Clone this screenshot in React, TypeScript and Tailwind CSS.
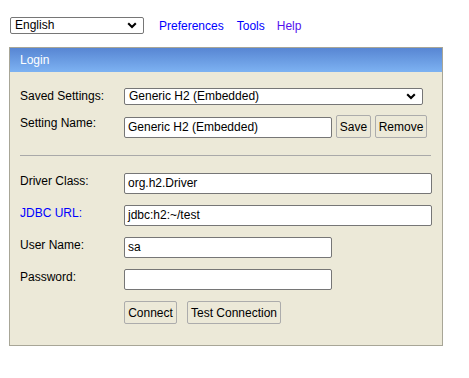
import React from "react";

function Chevron() {
  return (
    <svg width="10" height="7" viewBox="0 0 10 7" className="shrink-0">
      <path d="M1.2 1.3 L5 5 L8.8 1.3" fill="none" stroke="#000" strokeWidth="2.1" />
    </svg>
  );
}

function SelectBox({ value, className }: { value: string; className: string }) {
  return (
    <div className={`flex items-center justify-between h-[17px] border border-[#767676] rounded-[2px] bg-white pl-[4px] pr-[6px] ${className}`}>
      <span className="leading-[15px]">{value}</span>
      <Chevron />
    </div>
  );
}

function TextBox({ value, width }: { value?: string; width: string }) {
  return (
    <div className={`h-[21px] ${width} border border-[#767676] rounded-[2px] bg-white pl-[3px] flex items-center`}>
      <span className="leading-[15px]">{value}</span>
    </div>
  );
}

function Btn({ label, width }: { label: string; width: string }) {
  return (
    <div className={`h-[23px] ${width} border border-[#acacac] rounded-[2px] bg-[#ece9d8] flex items-center justify-center`}>
      {label}
    </div>
  );
}

function Row({ label, blue, children, className = "" }: { label: string; blue?: boolean; children: React.ReactNode; className?: string }) {
  return (
    <div className={`flex items-start ${className}`}>
      <div className={`w-[104px] leading-[14px] pt-[1px] ${blue ? "text-[#0000ff]" : "text-black"}`}>{label}</div>
      {children}
    </div>
  );
}

export default function App() {
  return (
    <div className="min-h-screen bg-white font-['Liberation_Sans',Arial,sans-serif] text-[12px] text-black pt-[17px] pl-[9px]">
      {/* top bar */}
      <div className="flex items-center h-[17px]">
        <SelectBox value="English" className="w-[134px] ml-[1px]" />
        <a className="ml-[15px] text-[#0000ff]">Preferences</a>
        <a className="ml-[13px] text-[#0000ff]">Tools</a>
        <a className="ml-[12px] text-[#5510ee]">Help</a>
      </div>

      {/* login panel */}
      <div className="mt-[13px] w-[434px] border border-[#a8a697] bg-[#ece9d8]">
        <div className="h-[24px] bg-gradient-to-b from-[#5886d3] to-[#7db2f2] text-white pl-[10px] flex items-center">
          Login
        </div>
        <div className="pl-[10px] pt-[16px] pb-[21px]">
          <Row label="Saved Settings:">
            <SelectBox value="Generic H2 (Embedded)" className="w-[299px]" />
          </Row>
          <Row label="Setting Name:" className="mt-[10px]">
            <div className="flex items-center gap-[4px]">
              <div className="mt-[1px]">
                <TextBox value="Generic H2 (Embedded)" width="w-[208px]" />
              </div>
              <Btn label="Save" width="w-[35px]" />
              <Btn label="Remove" width="w-[52px]" />
            </div>
          </Row>
          <div className="mt-[17px] mr-[11px] h-[1px] bg-[#a9a9a9]" />
          <Row label="Driver Class:" className="mt-[17px]">
            <TextBox value="org.h2.Driver" width="w-[308px]" />
          </Row>
          <Row label="JDBC URL:" blue className="mt-[11px]">
            <TextBox value="jdbc:h2:~/test" width="w-[308px]" />
          </Row>
          <Row label="User Name:" className="mt-[11px]">
            <TextBox value="sa" width="w-[208px]" />
          </Row>
          <Row label="Password:" className="mt-[11px]">
            <TextBox width="w-[208px]" />
          </Row>
          <div className="flex mt-[11px] pl-[104px] gap-[10px]">
            <Btn label="Connect" width="w-[53px]" />
            <Btn label="Test Connection" width="w-[94px]" />
          </div>
        </div>
      </div>
    </div>
  );
}
